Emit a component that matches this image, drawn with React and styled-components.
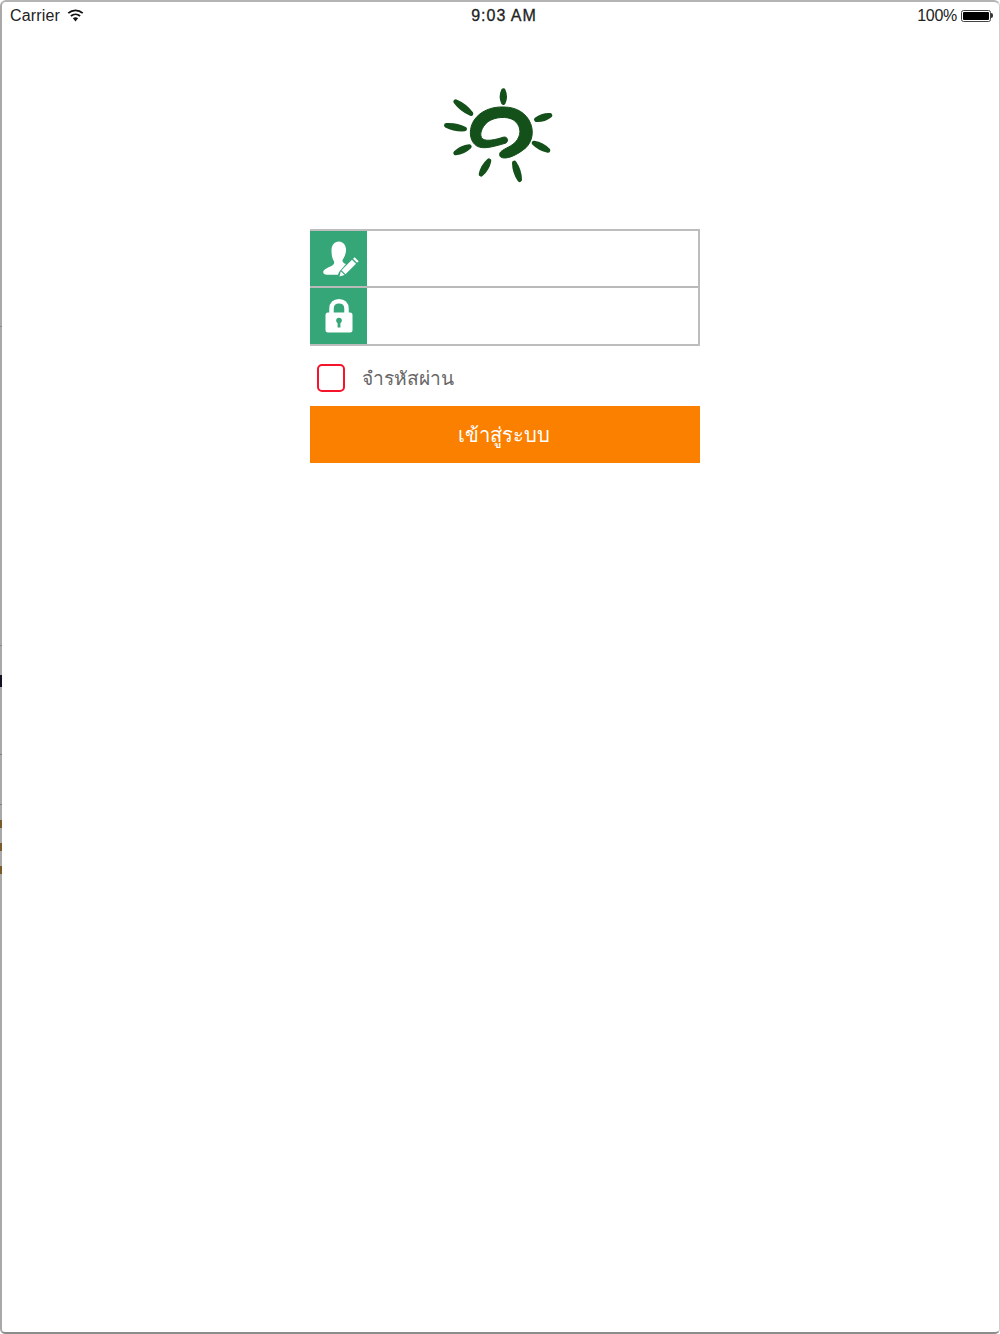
import React from "react";
import styled, { createGlobalStyle } from "styled-components";

const GlobalStyle = createGlobalStyle`
  html, body { margin: 0; padding: 0; background: #fff; }
  * { box-sizing: border-box; }
`;

const edgeMarks = [
  { top: 326, height: 1, color: "#8a8a8a" },
  { top: 645, height: 1, color: "#8a8a8a" },
  { top: 675, height: 12, color: "#111122" },
  { top: 754, height: 1, color: "#808080" },
  { top: 804, height: 1, color: "#808080" },
  { top: 820, height: 8, color: "#7a5a28" },
  { top: 843, height: 8, color: "#7a5a28" },
  { top: 866, height: 8, color: "#7a5a28" },
];

const rays = [
  [220, 47, 220, 83],
  [77, 80, 123, 116],
  [49, 151, 104, 162],
  [77, 234, 118, 215],
  [177, 257, 153, 298],
  [253, 264, 269, 314],
  [312, 204, 354, 226],
  [319, 134, 360, 121],
];

function leaf([x1, y1, x2, y2]) {
  const mx = (x1 + x2) / 2;
  const my = (y1 + y2) / 2;
  const len = Math.hypot(x2 - x1, y2 - y1);
  const nx = (-(y2 - y1) / len) * 8;
  const ny = ((x2 - x1) / len) * 8;
  return `M${x1} ${y1} Q${mx + nx} ${my + ny} ${x2} ${y2} Q${mx - nx} ${my - ny} ${x1} ${y1}Z`;
}

export default function App() {
  return (
    <Frame>
      <GlobalStyle />
      {edgeMarks.map((m) => (
        <EdgeMark key={m.top} top={m.top} height={m.height} color={m.color} />
      ))}
      <StatusBar>
        <StatusLeft>
          <span>Carrier</span>
          <WifiIcon />
        </StatusLeft>
        <StatusTime>9:03 AM</StatusTime>
        <StatusRight>
          <span>100%</span>
          <Battery>
            <BatteryFill />
          </Battery>
          <BatteryTip />
        </StatusRight>
      </StatusBar>

      <LogoRow>
        <Logo />
      </LogoRow>

      <Form>
        <Fields>
          <FieldRow>
            <IconCell>
              <UserPenIcon />
            </IconCell>
            <FieldInput type="text" />
          </FieldRow>
          <FieldRow last>
            <IconCell>
              <LockIcon />
            </IconCell>
            <FieldInput type="password" />
          </FieldRow>
        </Fields>
        <RememberRow>
          <CheckBox />
          <RememberText>จำรหัสผ่าน</RememberText>
        </RememberRow>
        <LoginButton>เข้าสู่ระบบ</LoginButton>
      </Form>
    </Frame>
  );
}

function WifiIcon() {
  return (
    <svg width="17" height="13" viewBox="0 0 17 13">
      <path d="M8.5 12.5 L5.9 9.3 A4.2 4.2 0 0 1 11.1 9.3 Z" fill="#111" />
      <path d="M3.9 7 A7 7 0 0 1 13.1 7" fill="none" stroke="#111" strokeWidth="1.8" />
      <path d="M1.3 4.2 A10.6 10.6 0 0 1 15.7 4.2" fill="none" stroke="#111" strokeWidth="1.8" />
    </svg>
  );
}

function Logo() {
  return (
    <svg width="135" height="120" viewBox="0 0 405 360">
      <g fill="#14501a" stroke="#14501a" strokeLinejoin="round">
        {rays.map((r) => (
          <path key={r.join()} d={leaf(r)} strokeWidth="14" />
        ))}
        <path
          strokeWidth="3"
          d="M212 246 C228 256 262 240 288 218 C306 200 312 172 302 146 C290 114 258 96 222 96 C186 94 150 108 132 136 C118 158 116 190 134 208 C150 224 176 220 228 204 C236 198 234 186 222 186 C196 194 172 200 158 192 C146 182 154 156 174 140 C194 126 232 122 252 136 C270 150 276 172 262 194 C250 212 232 216 218 226 C208 232 206 240 212 246Z"
        />
      </g>
    </svg>
  );
}

function UserPenIcon() {
  return (
    <svg width="40" height="40" viewBox="0 0 40 40">
      <path
        fill="#fff"
        d="M19.8 2.500 C24.500 2.500 27.500 7 27 12 C26.700 15.500 25 19 23.500 21 C23.300 23 24.500 24 27 25 L20 33 L19 35.700 L8 35.700 C5 35.700 3.500 34 4.500 32 C6 29.500 11 28 14 26 C15.500 24.500 15.500 23 14.500 21.500 C13 19 12.500 15 12.500 11.500 C12.500 6 15.500 2.500 19.800 2.500 Z"
      />
      <path fill="#fff" d="M22.500 31.300 L26.500 35.300 L37 24.800 L33 20.800 Z" />
      <path fill="#fff" d="M34 19.800 L38 23.800 L39.600 22.200 L35.600 18.200 Z" />
      <path fill="#fff" d="M21.800 32.200 L25.600 36 L20.500 37.500 Z" />
    </svg>
  );
}

function LockIcon() {
  return (
    <svg width="30" height="36" viewBox="0 0 30 36">
      <path
        d="M7.500 16 L7.500 10.500 C7.500 6 10.500 3.200 15 3.200 C19.500 3.200 22.500 6 22.500 10.500 L22.500 16"
        fill="none"
        stroke="#fff"
        strokeWidth="4.500"
      />
      <rect x="1.500" y="14.500" width="27" height="20" rx="2.500" fill="#fff" />
      <circle cx="15" cy="22.500" r="2.800" fill="#35a678" />
      <rect x="13.600" y="23" width="2.800" height="6.500" fill="#35a678" />
    </svg>
  );
}

const Frame = styled.div`
  position: relative;
  width: 1000px;
  height: 1334px;
  background: #fff;
  border-left: 2px solid #a9a9a9;
  border-top: 2px solid #b4b4b4;
  border-bottom: 2px solid #8c8c8c;
  border-right: 1px solid #cfcfcf;
  border-radius: 6px 6px 5px 5px;
`;

const EdgeMark = styled.div`
  position: absolute;
  left: -2px;
  width: 2px;
  top: ${({ top }) => top - 2}px;
  height: ${({ height }) => height}px;
  background: ${({ color }) => color};
`;

const StatusBar = styled.div`
  display: grid;
  grid-template-columns: 1fr auto 1fr;
  align-items: center;
  height: 27px;
  padding: 0 6px 0 8px;
  font-family: "Liberation Sans", Arial, sans-serif;
  font-size: 16px;
  color: #222;
`;

const StatusLeft = styled.div`
  display: flex;
  align-items: center;
  gap: 7px;
  letter-spacing: 0.15px;
`;

const StatusTime = styled.div`
  letter-spacing: 1px;
  margin-left: 5px;
  -webkit-text-stroke: 0.3px #222;
`;

const StatusRight = styled.div`
  display: flex;
  align-items: center;
  justify-content: flex-end;
  letter-spacing: -0.3px;
`;

const Battery = styled.div`
  width: 30px;
  height: 12px;
  margin-left: 4px;
  padding: 1px;
  border: 1px solid #444;
  border-radius: 2.500px;
`;

const BatteryFill = styled.div`
  width: 100%;
  height: 100%;
  background: #000;
  border-radius: 1px;
`;

const BatteryTip = styled.div`
  width: 2px;
  height: 5px;
  background: #333;
  border-radius: 0 2px 2px 0;
`;

const LogoRow = styled.div`
  display: flex;
  margin: 46px 0 0 428px;
  height: 154px;
`;

const Form = styled.div`
  width: 390px;
  margin-left: 308px;
  display: flex;
  flex-direction: column;
`;

const Fields = styled.div`
  display: flex;
  flex-direction: column;
  border: solid #bdbdbd;
  border-width: 2px 2px 2px 0;
`;

const FieldRow = styled.div`
  display: flex;
  height: ${({ last }) => (last ? 56 : 57)}px;
  border-bottom: ${({ last }) => (last ? "none" : "2px solid #b9b9b9")};
`;

const IconCell = styled.div`
  width: 57px;
  flex: none;
  display: flex;
  align-items: center;
  justify-content: center;
  background: #35a678;
`;

const FieldInput = styled.input`
  flex: 1;
  min-width: 0;
  border: none;
  outline: none;
  background: #fff;
`;

const RememberRow = styled.div`
  display: flex;
  align-items: center;
  height: 60px;
  padding: 4px 0 0 7px;
`;

const CheckBox = styled.div`
  width: 28px;
  height: 28px;
  border: 2.500px solid #f5142c;
  border-radius: 5px;
  background: #fff;
`;

const RememberText = styled.span`
  margin-left: 17px;
  font-family: "Noto Sans", "DejaVu Sans", sans-serif;
  font-size: 19.200px;
  color: #666;
`;

const LoginButton = styled.button`
  height: 57px;
  border: none;
  padding: 0 2px 0 0;
  background: #fb8000;
  color: #fff;
  font-family: "Noto Sans", "DejaVu Sans", sans-serif;
  font-size: 20.200px;
`;
